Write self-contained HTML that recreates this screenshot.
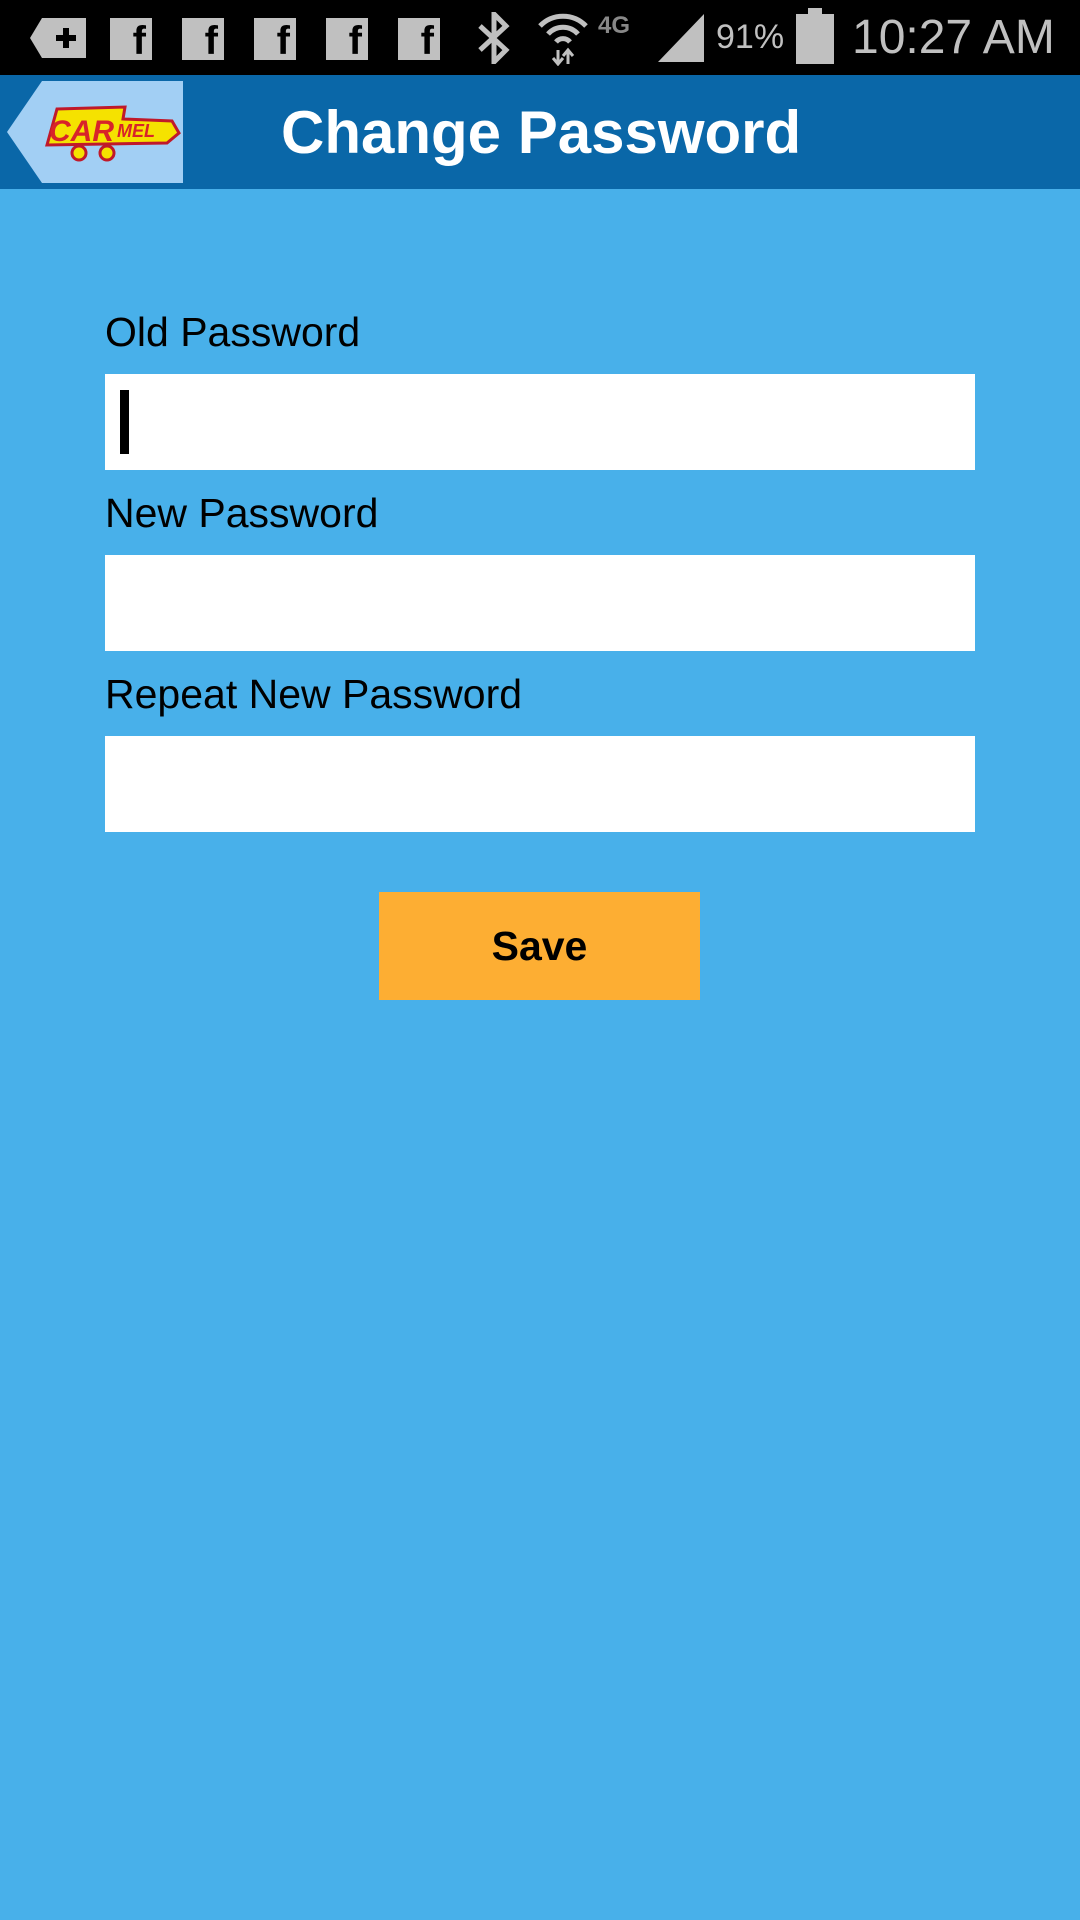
<!DOCTYPE html>
<html><head><meta charset="utf-8"><style>
*{margin:0;padding:0;box-sizing:border-box}
body{width:1080px;height:1920px;background:#48b0ea;position:relative;overflow:hidden;font-family:"Liberation Sans",sans-serif}
.abs{position:absolute}
.sb{left:0;top:0;width:1080px;height:75px;background:#000}
.hd{left:0;top:75px;width:1080px;height:114px;background:#0a67a8}
.lbl{position:absolute;left:105px;font-size:41px;color:#000;line-height:1}
.inp{position:absolute;left:105px;width:870px;height:96px;background:#fff}
.fb{position:absolute;top:18px;width:42px;height:42px;background:#c0c0c0}
.fb span{position:absolute;right:6px;bottom:-4px;font:bold 40px "Liberation Sans",sans-serif;color:#000}
</style></head><body>
<div class="abs sb">
  <svg class="abs" style="left:30px;top:18px" width="56" height="40"><polygon points="12,0 56,0 56,40 12,40 0,20" fill="#c0c0c0"/><rect x="26" y="17" width="20" height="6" fill="#000"/><rect x="33" y="10" width="6" height="20" fill="#000"/></svg>
  <div class="fb" style="left:110px"><span>f</span></div>
  <div class="fb" style="left:182px"><span>f</span></div>
  <div class="fb" style="left:254px"><span>f</span></div>
  <div class="fb" style="left:326px"><span>f</span></div>
  <div class="fb" style="left:398px"><span>f</span></div>
  <svg class="abs" style="left:476px;top:12px" width="36" height="52"><path d="M4 14 L30 38 L18 50 L18 2 L30 14 L4 38" stroke="#c0c0c0" stroke-width="5" fill="none"/></svg>
  <svg class="abs" style="left:536px;top:10px" width="54" height="56"><path d="M4 16 A32 32 0 0 1 50 16 M12 24 A20 20 0 0 1 42 24 M20 32 A9 9 0 0 1 34 32" stroke="#c0c0c0" stroke-width="5" fill="none"/><path d="M22 40 v14 M17 48 l5 6 5-6 M32 54 v-14 M27 46 l5-6 5 6" stroke="#c0c0c0" stroke-width="3" fill="none"/></svg>
  <div class="abs" style="left:598px;top:12px;font:bold 24px 'Liberation Sans';color:#888">4G</div>
  <svg class="abs" style="left:658px;top:14px" width="46" height="48"><polygon points="46,0 46,48 0,48" fill="#c0c0c0"/></svg>
  <div class="abs" style="left:716px;top:18px;font-size:34px;color:#c0c0c0">91%</div>
  <svg class="abs" style="left:796px;top:8px" width="38" height="56"><rect x="12" y="0" width="14" height="6" fill="#c0c0c0"/><rect x="0" y="6" width="38" height="50" fill="#c0c0c0"/></svg>
  <div class="abs" style="left:852px;top:10px;font-size:48px;color:#c0c0c0">10:27 AM</div>
</div>
<div class="abs hd">
  <svg class="abs" style="left:7px;top:6px" width="176" height="102"><polygon points="35,0 176,0 176,102 35,102 0,51" fill="#a2cff4"/>
  <polygon points="50,28 118,26 116,38 165,40 172,52 160,62 40,64" fill="#f5e200" stroke="#c0192a" stroke-width="3"/>
  <text x="42" y="60" font-family="Liberation Sans" font-weight="bold" font-style="italic" font-size="30" fill="#d8232a">CAR</text>
  <text x="110" y="56" font-family="Liberation Sans" font-weight="bold" font-style="italic" font-size="18" fill="#d8232a">MEL</text>
  <circle cx="72" cy="72" r="7" fill="#f5e200" stroke="#c0192a" stroke-width="3"/><circle cx="100" cy="72" r="7" fill="#f5e200" stroke="#c0192a" stroke-width="3"/>
  </svg>
  <div class="abs" style="left:281px;top:25px;font-size:60px;font-weight:bold;color:#fff;line-height:1.1">Change Password</div>
</div>
<div class="lbl" style="top:312px">Old Password</div>
<div class="inp" style="top:374px"><div class="abs" style="left:15px;top:16px;width:9px;height:64px;background:#000"></div></div>
<div class="lbl" style="top:493px">New Password</div>
<div class="inp" style="top:555px"></div>
<div class="lbl" style="top:674px">Repeat New Password</div>
<div class="inp" style="top:736px"></div>
<div class="abs" style="left:379px;top:892px;width:321px;height:108px;background:#fdae33;font-size:41px;font-weight:bold;text-align:center;line-height:108px">Save</div>
</body></html>
